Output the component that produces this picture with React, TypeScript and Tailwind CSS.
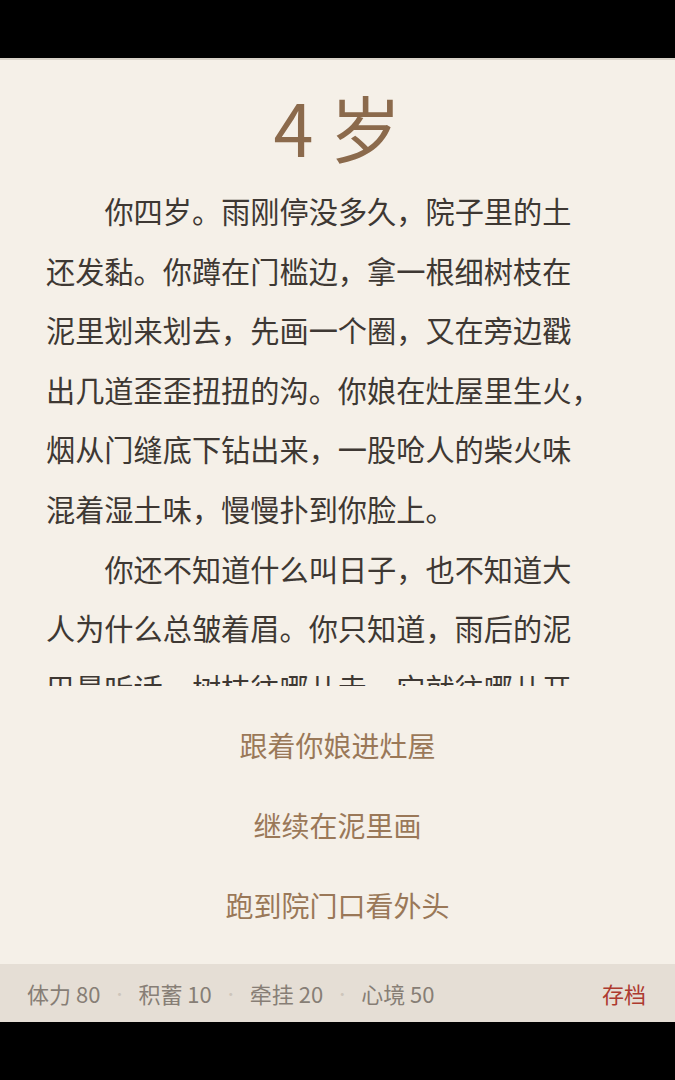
import React from 'react';

// 行尾的全角标点按半宽排（和参考图一样悬在行尾）
const Trim = ({ children }: { children: React.ReactNode }) => (
  <span className="tracking-[-0.5em]">{children}</span>
);

const paragraphs: React.ReactNode[] = [
  <>
    你四岁。雨刚停没多久，院子里的土还发黏。你蹲在门槛边，拿一根细树枝在泥里划来划去，先画一个圈，又在旁边戳出几道歪歪扭扭的沟。你娘在灶屋里生火<Trim>，</Trim>烟从门缝底下钻出来，一股呛人的柴火味混着湿土味，慢慢扑到你脸上。
  </>,
  <>
    你还不知道什么叫日子，也不知道大人为什么总皱着眉。你只知道，雨后的泥巴最听话，树枝往哪儿走，它就往哪儿开<Trim>。</Trim>
  </>,
];

const choices = ['跟着你娘进灶屋', '继续在泥里画', '跑到院门口看外头'];

const stats = [
  { label: '体力', value: 80 },
  { label: '积蓄', value: 10 },
  { label: '牵挂', value: 20 },
  { label: '心境', value: 50 },
];

const App = () => {
  return (
    <div
      className="w-full h-[1080px] bg-black flex flex-col"
      style={{ fontFamily: '"Noto Sans CJK SC", "Noto Sans", sans-serif' }}
    >
      {/* status bar area */}
      <div className="h-[58px] shrink-0 bg-black" />

      {/* page */}
      <div className="flex-1 flex flex-col bg-[#f5f0e8] border-t-2 border-[#d9d2c9]">
        {/* title */}
        <h1 className="mt-[30px] text-center text-[72px] leading-[72px] text-[#8b6a4c]">4 岁</h1>

        {/* story text */}
        <div className="mt-[19px] h-[505px] overflow-hidden pl-[46px] pr-[80px]">
          {paragraphs.map((p, i) => (
            <p key={i} className="indent-[2em] text-[29.2px] leading-[59.6px] text-[#3e3833]">
              {p}
            </p>
          ))}
        </div>

        {/* choices */}
        <div className="flex-1 flex flex-col justify-center py-[18px]">
          {choices.map((c) => (
            <button key={c} className="h-[80px] text-center text-[28px] text-[#9a7858]">
              {c}
            </button>
          ))}
        </div>

        {/* bottom bar */}
        <div className="h-[58px] shrink-0 bg-[#e5ded5] flex items-center justify-between pl-[27px] pr-[29px]">
          <div className="flex items-center text-[22px] text-[#877e76]">
            {stats.map((s, i) => (
              <React.Fragment key={s.label}>
                {i > 0 && <span className="mx-[12px] text-[14px] text-[#cdc5bb]">·</span>}
                <span>
                  {s.label} {s.value}
                </span>
              </React.Fragment>
            ))}
          </div>
          <button className="text-[22px] text-[#ad3a2f]">存档</button>
        </div>
      </div>

      <div className="h-[58px] shrink-0 bg-black" />
    </div>
  );
};

export default App;
